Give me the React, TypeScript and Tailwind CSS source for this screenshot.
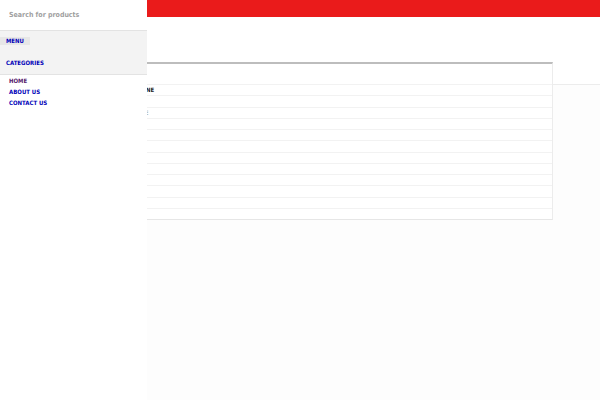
import React from "react";

const pages = [
  { label: "HOME", color: "text-[#551a6b]" },
  { label: "ABOUT US", color: "text-[#0000b8]" },
  { label: "CONTACT US", color: "text-[#0000b8]" },
];

const rows = ["NE", "", "E", "", "", "", "", "", "", "", "", ""];

function Drawer() {
  return (
    <aside className="fixed inset-y-0 left-0 w-[147px] bg-white font-bold">
      <input
        type="search"
        aria-label="Search for products"
        placeholder="Search for products"
        className="block h-[30px] w-full bg-white px-[9px] text-[7px] leading-[10px] text-[#777] outline-none placeholder:text-[#a0a0a0]"
      />
      <nav className="flex h-[45px] flex-col items-start justify-between border-y border-[#e3e3e3] bg-[#f3f3f3] pt-[6px] pb-[7px] text-[6px] leading-[8px]">
        <a href="#menu" className="bg-[#e7e7e7] px-[6px] text-[#0000b8]">
          MENU
        </a>
        <a href="#categories" className="px-[6px] text-[#0000b8]">
          CATEGORIES
        </a>
      </nav>
      <ul className="text-[6px] leading-[11px]">
        {pages.map((page) => (
          <li key={page.label} className="px-[9px]">
            <a href="#page" className={page.color}>
              {page.label}
            </a>
          </li>
        ))}
      </ul>
    </aside>
  );
}

function MegaMenu() {
  return (
    <section className="absolute top-[62px] right-[47px] left-[47px] border-t-2 border-r border-b border-t-[#bdbdbd] border-r-[#ececec] border-b-[#e6e6e6] bg-white">
      <div className="h-[20px]" />
      <ul className="grid h-[135px] auto-rows-fr text-[6px] leading-[8px]">
        {rows.map((label, index) => (
          <li
            key={index}
            className={
              index === 0
                ? "flex items-center border-t border-[#f2f2f2] pl-[99px] font-bold text-[#222]"
                : "flex items-center border-t border-[#f2f2f2] pl-[98px] text-[#777]"
            }
          >
            {label}
          </li>
        ))}
      </ul>
    </section>
  );
}

export default function App() {
  return (
    <div className="relative min-h-screen bg-[#fdfdfd] font-['DejaVu_Sans_Condensed','DejaVu_Sans',sans-serif]">
      <div className="h-[17px] bg-[#ea1b1b]" />
      <header className="h-[68px] border-b border-[#ececec] bg-white" />
      <MegaMenu />
      <Drawer />
    </div>
  );
}
